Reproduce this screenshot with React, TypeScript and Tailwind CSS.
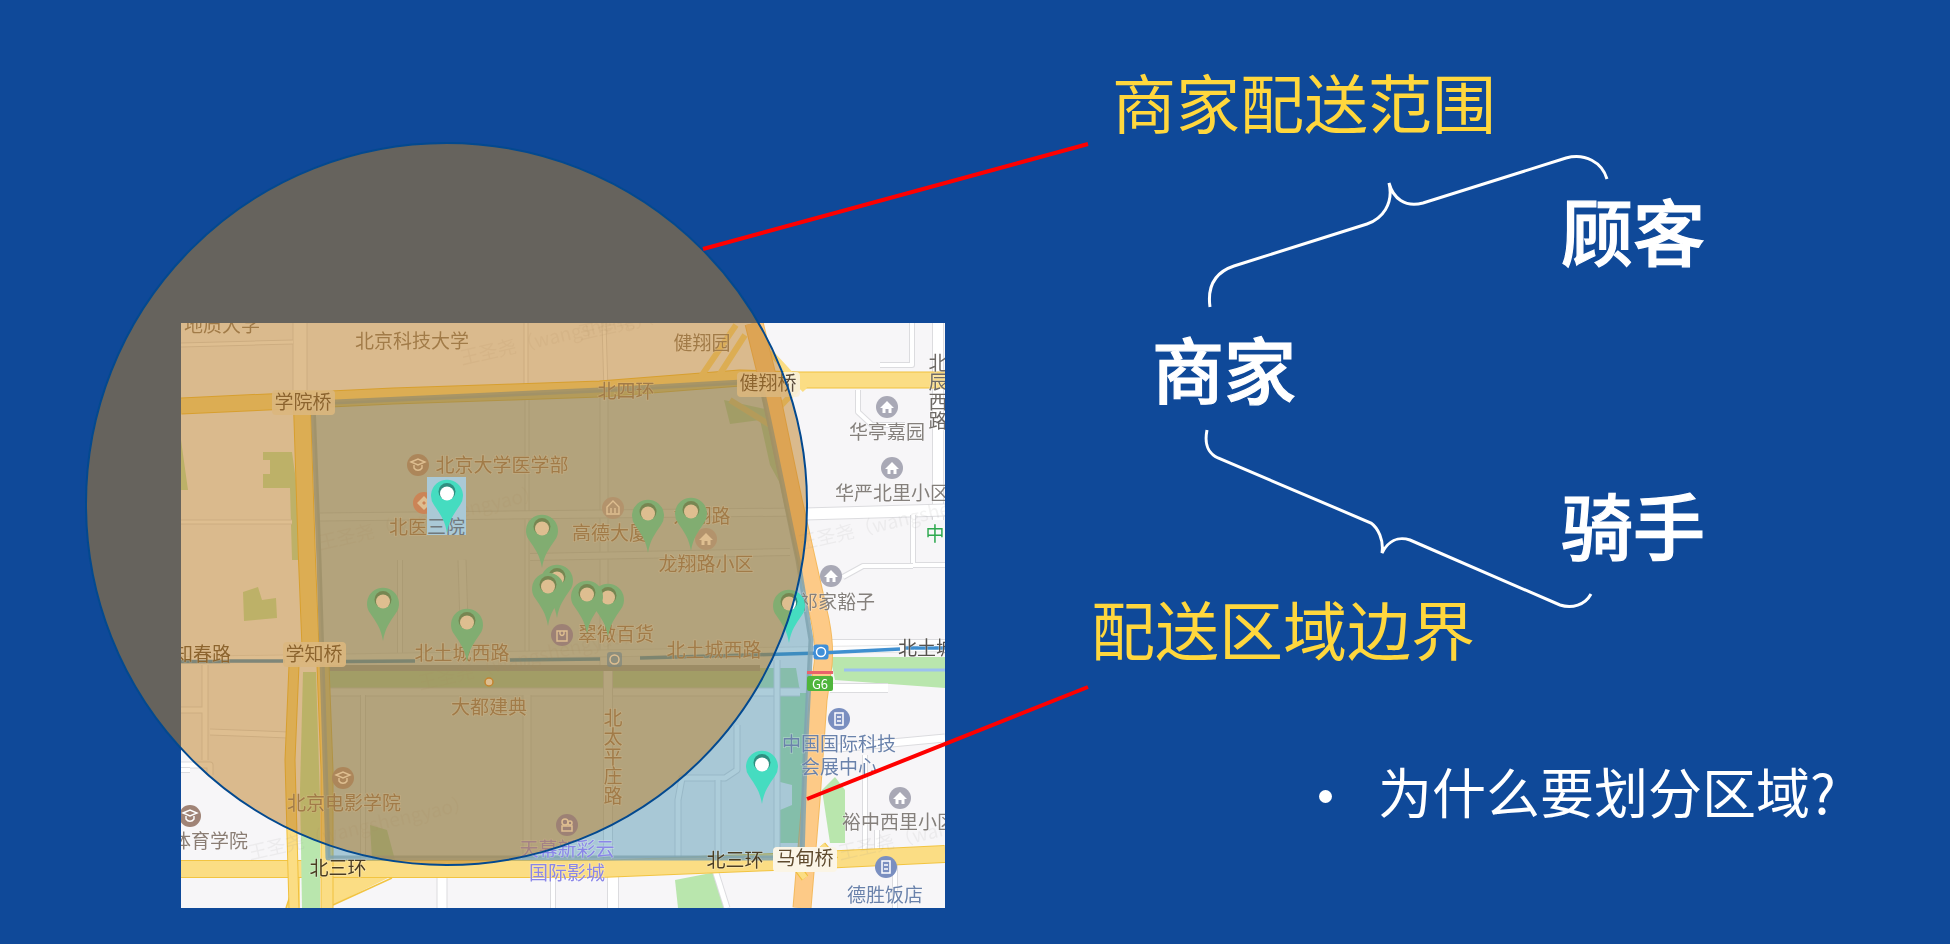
const FONT = '"Noto Sans CJK SC", "Noto Sans", sans-serif';

type TProps = { x: number; y: number; c: string; s?: number; f?: string; a?: "start" | "middle" | "end"; halo?: boolean; w?: number };
function T({ x, y, c, s = 19, f = "#85786e", a = "middle", halo = true, w = 400 }: TProps) {
  return (
    <text x={x} y={y - 2} textAnchor={a} dominantBaseline="central" fontSize={s} fill={f} fontWeight={w}
      stroke={halo ? "#ffffff" : "none"} strokeOpacity={0.3} strokeWidth={halo ? 1.5 : 0} paintOrder="stroke">
      {c}
    </text>
  );
}

function V({ x, y, c, step = 19.5, f = "#85786e" }: { x: number; y: number; c: string; step?: number; f?: string }) {
  return (
    <>
      {c.split("").map((ch, i) => (
        <T key={i} x={x} y={y + i * step} c={ch} f={f} />
      ))}
    </>
  );
}

function Road({ d, w, fill = "#ffffff", edge = "#dcdcdf" }: { d: string; w: number; fill?: string; edge?: string }) {
  return (
    <>
      <path d={d} fill="none" stroke={edge} strokeWidth={w + 2} strokeLinejoin="round" />
      <path d={d} fill="none" stroke={fill} strokeWidth={w} strokeLinejoin="round" />
    </>
  );
}

function Pin({ x, y }: { x: number; y: number }) {
  return (
    <g transform={`translate(${x} ${y})`}>
      <path d="M0 40C-2 27-7 21-13 12A16 16 0 1 1 13 12C7 21 2 27 0 40Z" fill="#45dcc0" />
      <circle cx="0" cy="-1.5" r="8.5" fill="#2f8f80" />
      <circle cx="0" cy="0.5" r="7" fill="#ffffff" />
    </g>
  );
}

function Poi({ x, y, kind = "home", fill = "#a9a9b6" }: { x: number; y: number; kind?: "home" | "school" | "shop" | "film" | "bank" | "hotel" | "office"; fill?: string }) {
  return (
    <g transform={`translate(${x} ${y})`}>
      <circle r="11" fill={fill} />
      {kind === "home" && <path d="M0-6L7 1H4.5V6H1.5V2H-1.5V6H-4.5V1H-7Z" fill="#fff" />}
      {kind === "school" && <path d="M-7-3L0-6 7-3 0 0ZM-4 0V3C-2 6 2 6 4 3V0" fill="none" stroke="#fff" strokeWidth="1.4" />}
      {kind === "shop" && <path d="M-5-4H5V6H-5ZM-2-4V-1C-1 1 1 1 2-1V-4" fill="none" stroke="#fff" strokeWidth="1.4" />}
      {kind === "film" && <g fill="none" stroke="#fff" strokeWidth="1.5"><circle cx="-2" cy="-3" r="3" /><circle cx="3" cy="-2" r="2" /><path d="M-5 1H5V6H-5Z" /></g>}
      {kind === "bank" && <path d="M0-7L7 0 0 7-7 0Z M0-2L2 0 0 2-2 0Z" fill="#fff" fillRule="evenodd" />}
      {kind === "hotel" && <path d="M-4-6H4V6H-4ZM-2-2H2M-2 2H2" fill="none" stroke="#fff" strokeWidth="1.5" />}
      {kind === "office" && <path d="M-6-1L0-7 6-1V6H-6ZM-2 0V5M2 0V5" fill="none" stroke="#fff" strokeWidth="1.4" />}
    </g>
  );
}

function Watermark({ x, y }: { x: number; y: number }) {
  return (
    <text x={x} y={y} fontSize="19" fill="#8f8f8f" opacity="0.1" transform={`rotate(-13 ${x} ${y})`}>
      王圣尧（wangshengyao）
    </text>
  );
}

function MapDrawing() {
  return (
    <svg viewBox="181 323 764 585" width={764} height={585} className="block blur-[0.4px]" style={{ fontFamily: FONT }}>
      <rect x="181" y="323" width="764" height="585" fill="#f7f6f8" />

      {/* parks */}
      <path d="M181 440L188 490H181ZM263 452H292L297 488 263 488V474H270V460H263Z" fill="#bde4ae" />
      <path d="M290 488H297L301 560H292Z" fill="#bde4ae" />
      <path d="M243 592L258 587 262 600 276 598 277 618 244 621Z" fill="#bde4ae" />
      <path d="M724 400L770 410 785 470 800 520 770 465 760 420 730 424Z" fill="#bde4ae" />
      <path d="M325 668H796L800 692H325Z" fill="#bde4ae" />
      <path d="M830 657H945V688L835 680Z" fill="#b9e6ad" />
      <path d="M780 693H807L803 843H780V810L792 805V785L780 782Z" fill="#b9e6ad" />
      <path d="M822 790L835 777 845 790V843H830Z" fill="#b9e6ad" />
      <path d="M675 880L716 872 727 908H678Z" fill="#b9e6ad" />
      <path d="M370 825L387 830 395 860H372Z" fill="#bde4ae" />
      <path d="M844 670H945" stroke="#9cc0f0" strokeWidth="3" />

      {/* minor roads */}
      <Road d="M300 323V392" w={13} />
      <Road d="M181 345L293 342" w={3} />
      <Road d="M526 323V385" w={3} />
      <Road d="M527 396V670" w={3} />
      <Road d="M604 323L606 392" w={3} />
      <Road d="M604 396V665" w={7} />
      <Road d="M400 560V654" w={4} />
      <Road d="M462 560L465 654" w={7} />
      <Road d="M181 522H292" w={3} />
      <Road d="M320 517L800 512" w={7} />
      <Road d="M530 557L790 552" w={6} />
      <Road d="M325 692H800" w={7} />
      <Road d="M527 695V860" w={7} />
      <Road d="M608 665V860" w={8} />
      <Road d="M363 695V860" w={4} />
      <Road d="M205 665V760M181 710H205M210 732L288 735M181 765H210V775" w={5} />
      <Road d="M777 660V850" w={5} />
      <Road d="M737 725V770L725 778H682L678 800V860" w={5} />
      <Road d="M718 780V860" w={5} />
      <Road d="M912 323V365H880" w={4} />
      <Road d="M938 323V520" w={10} />
      <Road d="M805 514L945 510" w={11} />
      <Road d="M913 515V565H945" w={4} />
      <Road d="M843 577L863 566H913" w={4} />
      <Road d="M858 390V412L872 425H905" w={4} />
      <Road d="M830 645H945" w={10} />
      <Road d="M830 688H888" w={8} />
      <Road d="M838 748L945 738" w={7} />
      <Road d="M865 755V850" w={4} />
      <Road d="M877 830V850" w={4} />
      <Road d="M181 770H190" w={4} />
      <Road d="M613 875V908" w={10} />
      <Road d="M442 875V908" w={9} />
      <Road d="M553 875V908" w={4} />
      <Road d="M715 870L727 908" w={5} />
      <Road d="M895 860V908" w={4} />

      {/* main roads */}
      <Road d="M181 660L945 648" w={6} fill="#fdfdfd" edge="#e5e5e5" />
      <path d="M325 668H760" stroke="#a9a9a9" strokeWidth="6" />
      <path d="M392 876L333 905V870H392Z" fill="#fbdd84" />
      <path d="M392 878L333 905" fill="none" stroke="#f2c441" strokeWidth="1.5" />
      <path d="M270 860H300V878H270Z M286 908L298 870H300V908Z" fill="#fbdd84" />
      <path d="M286 908L298 872" fill="none" stroke="#f2c441" strokeWidth="1.5" />
      <Road d="M181 869H600L800 861 945 854" w={16} fill="#fbdd84" edge="#f2c441" />
      <Road d="M294 665L290 760 294 908" w={9} fill="#fbdd84" edge="#f0c03c" />
      <Road d="M323 665L327 770V908" w={11} fill="#fbdd84" edge="#f0c03c" />
      <path d="M303 672H316L320 800V908H302L300 790Z" fill="#b9e6ad" />
      <Road d="M302 405L307 560 311 660" w={16} fill="#fbdd84" edge="#f0c03c" />
      <Road d="M181 406L393 396 600 389 740 378 800 380 945 380" w={15} fill="#fbdd84" edge="#f0c03c" />
      <path d="M700 378L736 325M716 380L745 335M770 352L805 390M775 412L810 375M730 400L770 425" fill="none" stroke="#fbdd84" strokeWidth="6" />
      <Road d="M754 323L768 380 793 500 820 620Q826 650 822 672L818 700 811 800 802 908" w={17} fill="#fdca87" edge="#f4ba5e" />
      <Road d="M822 845L835 860M790 858L805 878" w={6} fill="#fbdd84" edge="#f0c03c" />

      {/* metro */}
      <path d="M181 661.5H230M228 661L285 661M346 661.5L415 661M510 660L600 659M640 658L820 653L900 649M905 648H945" fill="none" stroke="#3f8fd0" strokeWidth="3.5" />

      {/* delivery area */}
      <path d="M313 403L600 390 760 381C770 420 785 500 798 560L811 640 805 760 802 858H328L319 560Z"
        fill="#3c88a8" fillOpacity="0.42" stroke="#7fa3b0" strokeOpacity="0.85" strokeWidth="5" strokeLinejoin="round" />

      <Watermark x={462} y={365} />
      <Watermark x={580} y={340} />
      <Watermark x={320} y={550} />
      <Watermark x={800} y={550} />
      <Watermark x={250} y={860} />
      <Watermark x={420} y={690} />
      <Watermark x={840} y={860} />

      {/* pills */}
      <rect x="272" y="390" width="63" height="25" rx="4" fill="#f8efd9" fillOpacity="0.9" />
      <rect x="737" y="372" width="63" height="25" rx="4" fill="#f8efd9" fillOpacity="0.9" />
      <rect x="283" y="642" width="63" height="25" rx="4" fill="#f8efd9" fillOpacity="0.9" />
      <rect x="773" y="847" width="64" height="25" rx="4" fill="#fbf5e6" />

      {/* labels */}
      <T x={260} y={325} c="地质大学" a="end" />
      <T x={412} y={341} c="北京科技大学" />
      <T x={303} y={402} c="学院桥" f="#5a4a3a" />
      <T x={626} y={391} c="北四环" />
      <T x={702} y={343} c="健翔园" />
      <T x={768} y={383} c="健翔桥" f="#5a4a3a" />
      <T x={887} y={432} c="华亭嘉园" f="#85807c" />
      <T x={835} y={493} c="华严北里小区" a="start" f="#85807c" />
      <V x={938} y={363} c="北辰西路" f="#6e6a66" />
      <T x={935} y={534} c="中" f="#2ea84f" />
      <T x={502} y={465} c="北京大学医学部" />
      <T x={408} y={527} c="北医" />
      <T x={610} y={533} c="高德大厦" />
      <T x={702} y={516} c="龙翔路" />
      <T x={706} y={564} c="龙翔路小区" />
      <T x={799} y={602} c="祁家豁子" a="start" f="#85807c" />
      <T x={616} y={634} c="翠微百货" />
      <T x={174} y={654} c="知春路" a="start" f="#5a4a3a" s={19} />
      <T x={314} y={654} c="学知桥" f="#5a4a3a" />
      <T x={462} y={653} c="北土城西路" />
      <T x={714} y={650} c="北土城西路" />
      <T x={898} y={648} c="北土城" a="start" f="#57534e" />
      <T x={489} y={707} c="大都建典" />
      <V x={613} y={718} c="北太平庄路" />
      <T x={344} y={803} c="北京电影学院" />
      <T x={172} y={841} c="体育学院" a="start" f="#8a7d74" />
      <T x={338} y={868} c="北三环" f="#4a3c22" />
      <T x={567} y={849} c="天幕新彩云" f="#8a86e8" />
      <T x={567} y={873} c="国际影城" f="#8a86e8" />
      <T x={735} y={860} c="北三环" f="#4a3c22" />
      <T x={805} y={858} c="马甸桥" f="#5f4b2e" />
      <T x={839} y={744} c="中国国际科技" f="#6a82ab" />
      <T x={839} y={767} c="会展中心" f="#6a82ab" />
      <T x={842} y={822} c="裕中西里小区" a="start" f="#85807c" />
      <T x={885} y={895} c="德胜饭店" f="#6a82ab" />

      {/* poi icons */}
      <Poi x={887} y={407} />
      <Poi x={892} y={468} />
      <Poi x={831} y={576} />
      <Poi x={900} y={798} />
      <Poi x={706} y={539} />
      <Poi x={613} y={508} kind="office" />
      <Poi x={418} y={465} kind="school" fill="#9b8f92" />
      <Poi x={424} y={503} kind="bank" fill="#d98a8a" />
      <Poi x={562} y={635} kind="shop" fill="#7d85c8" />
      <Poi x={343} y={778} kind="school" fill="#9b8f92" />
      <Poi x={190} y={816} kind="school" fill="#a08477" />
      <Poi x={567} y={825} kind="film" fill="#7d85c8" />
      <Poi x={839} y={719} kind="hotel" fill="#7a8fc0" />
      <Poi x={886} y={867} kind="hotel" fill="#7a8fc0" />
      <circle cx="489" cy="682" r="4" fill="#fff" stroke="#c78a3c" strokeWidth="1.5" />

      {/* metro + highway marks */}
      <g transform="translate(821 652)">
        <rect x="-7.5" y="-7.5" width="15" height="15" rx="3" fill="#3f8fd8" />
        <circle r="4.5" fill="none" stroke="#fff" strokeWidth="1.5" />
      </g>
      <rect x="607" y="652" width="15" height="15" rx="3" fill="#3f8fd8" fillOpacity="0.7" />
      <circle cx="614.5" cy="659.5" r="4.5" fill="none" stroke="#fff" strokeWidth="1.5" />
      <rect x="807" y="671" width="26" height="3" fill="#e8616b" />
      <rect x="807" y="676" width="26" height="15" rx="2" fill="#4fb53c" />
      <text x="820" y="683.5" fontSize="13" fill="#fff" textAnchor="middle" dominantBaseline="central">G6</text>

      {/* pins */}
      <Pin x={648} y={513} />
      <Pin x={691} y={511} />
      <Pin x={542} y={528} />
      <Pin x={383} y={601} />
      <Pin x={467} y={622} />
      <Pin x={557} y={578} />
      <Pin x={548} y={586} />
      <Pin x={608} y={597} />
      <Pin x={587} y={594} />
      <Pin x={789} y={603} />
      <Pin x={762} y={764} />
    </svg>
  );
}

function SelectedMarker() {
  return (
    <div className="absolute left-[246px] top-[154px] h-[58px] w-[39px] bg-[#aac9d6]">
      <svg viewBox="427 477 39 58" width={39} height={58} className="block" style={{ fontFamily: FONT }}>
        <text x="446" y="525" textAnchor="middle" dominantBaseline="central" fontSize="19" fill="#71797d">三院</text>
        <Pin x={447} y={493} />
      </svg>
    </div>
  );
}

function Connectors() {
  return (
    <svg viewBox="0 0 1950 944" width={1950} height={944} className="absolute left-0 top-0 pointer-events-none">
      <path d="M703 249L1088 144" stroke="#fe0000" strokeWidth="4" />
      <path d="M807 799L1088 687" stroke="#fe0000" strokeWidth="4" />
      <path d="M1210 307C1207 285 1216 272 1234 266L1367 224C1382 219 1394 204 1389 183C1393 198 1405 208 1423 203L1566 158C1585 153 1602 162 1607 179" fill="none" stroke="#fff" strokeWidth="3" />
      <path d="M1207 430C1204 445 1208 453 1218 458L1371 523C1378 528 1384 540 1382 553C1388 541 1398 536 1410 540L1560 605C1572 609 1585 605 1591 594" fill="none" stroke="#fff" strokeWidth="3" />
    </svg>
  );
}

export default function App() {
  return (
    <div className="relative flex h-[944px] w-[1950px] overflow-hidden bg-[#0f4999]" style={{ fontFamily: FONT }}>
      <div className="w-[945px] shrink-0 pl-[181px] pt-[323px]">
        <div className="relative h-[585px] w-[764px]">
          <MapDrawing />
        </div>
      </div>

      <div className="absolute left-[85px] top-[142px] h-[724px] w-[723px] rounded-full border-2 border-[#03498f] bg-[#bd7e22]/50" />
      <Connectors />
      <div className="absolute left-[181px] top-[323px]">
        <SelectedMarker />
      </div>

      <div className="relative flex flex-1 flex-col pt-[60px]">
        <div className="ml-[167px] text-[64px] leading-[80px] text-[#ffd73d]">商家配送范围</div>
        <div className="ml-[616px] mt-[49px] text-[72px] font-medium leading-[80px] text-white [-webkit-text-stroke:1.2px_#ffffff]">顾客</div>
        <div className="ml-[207px] mt-[58px] text-[72px] font-medium leading-[80px] text-white [-webkit-text-stroke:1.2px_#ffffff]">商家</div>
        <div className="ml-[616px] mt-[76px] text-[72px] font-medium leading-[80px] text-white [-webkit-text-stroke:1.2px_#ffffff]">骑手</div>
        <div className="ml-[146px] mt-[24px] text-[64px] leading-[80px] text-[#ffd73d]">配送区域边界</div>
        <div className="ml-[374px] mt-[89px] flex gap-[46px] text-[54px] leading-[70px] text-white">
          <span className="mt-[34px] h-[13px] w-[13px] rounded-full bg-white" />
          <span className="font-normal">为什么要划分区域?</span>
        </div>
      </div>
    </div>
  );
}
